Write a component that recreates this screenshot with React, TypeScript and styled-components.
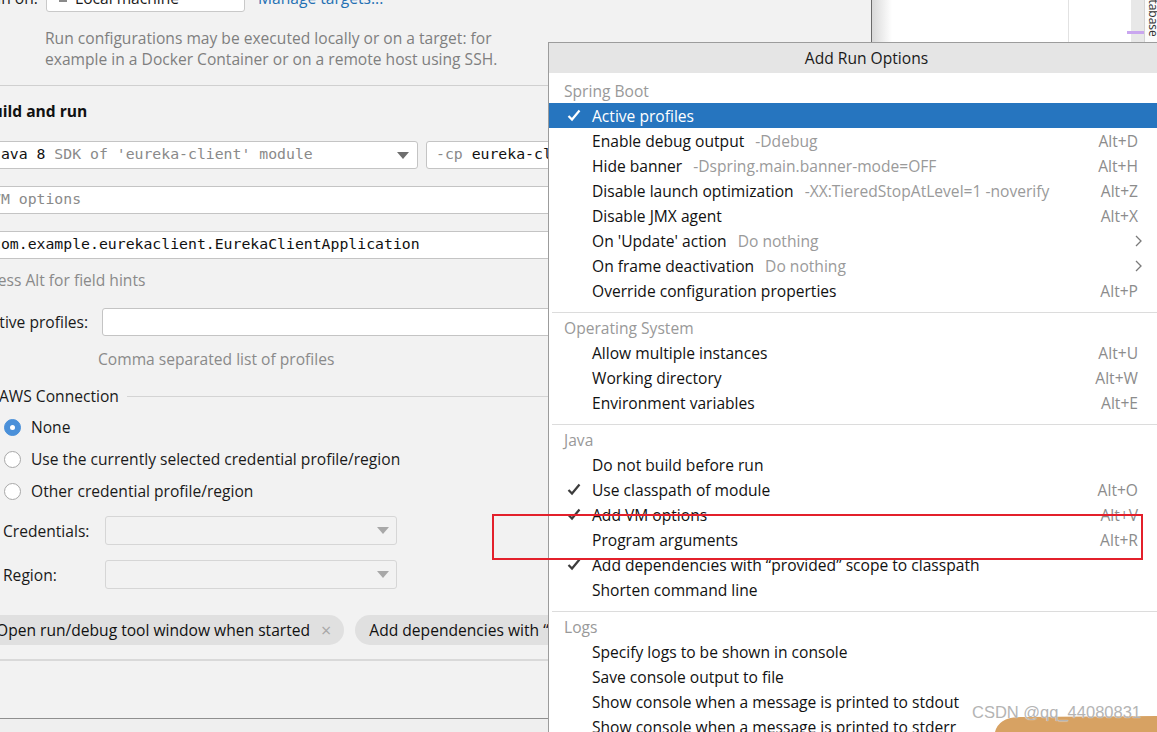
import React from 'react';
import styled, { createGlobalStyle } from 'styled-components';

const GlobalStyle = createGlobalStyle`
  html, body {
    margin: 0;
    padding: 0;
    background: #efefef;
  }
  body {
    font-family: 'Open Sans', 'Noto Sans', sans-serif;
    font-size: 15.6px;
    color: #1a1a1a;
  }
`;

type MenuItem = {
  label: string;
  hint?: string;
  shortcut?: string;
  checked?: boolean;
  selected?: boolean;
  submenu?: boolean;
};

type MenuGroup = { title: string; items: MenuItem[] };

const groups: MenuGroup[] = [
  {
    title: 'Spring Boot',
    items: [
      { label: 'Active profiles', checked: true, selected: true },
      { label: 'Enable debug output', hint: '-Ddebug', shortcut: 'Alt+D' },
      { label: 'Hide banner', hint: '-Dspring.main.banner-mode=OFF', shortcut: 'Alt+H' },
      {
        label: 'Disable launch optimization',
        hint: '-XX:TieredStopAtLevel=1 -noverify',
        shortcut: 'Alt+Z',
      },
      { label: 'Disable JMX agent', shortcut: 'Alt+X' },
      { label: "On 'Update' action", hint: 'Do nothing', submenu: true },
      { label: 'On frame deactivation', hint: 'Do nothing', submenu: true },
      { label: 'Override configuration properties', shortcut: 'Alt+P' },
    ],
  },
  {
    title: 'Operating System',
    items: [
      { label: 'Allow multiple instances', shortcut: 'Alt+U' },
      { label: 'Working directory', shortcut: 'Alt+W' },
      { label: 'Environment variables', shortcut: 'Alt+E' },
    ],
  },
  {
    title: 'Java',
    items: [
      { label: 'Do not build before run' },
      { label: 'Use classpath of module', checked: true, shortcut: 'Alt+O' },
      { label: 'Add VM options', checked: true, shortcut: 'Alt+V' },
      { label: 'Program arguments', shortcut: 'Alt+R' },
      { label: 'Add dependencies with \u201cprovided\u201d scope to classpath', checked: true },
      { label: 'Shorten command line' },
    ],
  },
  {
    title: 'Logs',
    items: [
      { label: 'Specify logs to be shown in console' },
      { label: 'Save console output to file' },
      { label: 'Show console when a message is printed to stdout' },
      { label: 'Show console when a message is printed to stderr' },
    ],
  },
];

const CheckIcon = ({ color }: { color: string }) => (
  <svg width="14" height="13" viewBox="0 0 14 13">
    <polyline points="1.5,7 5,10.5 12.5,1.5" fill="none" stroke={color} strokeWidth="2.2" />
  </svg>
);

const ArrowDown = ({ color }: { color: string }) => (
  <svg width="12" height="7" viewBox="0 0 12 7">
    <polygon points="0,0 12,0 6,7" fill={color} />
  </svg>
);

const Chevron = () => (
  <svg width="7" height="12" viewBox="0 0 7 12">
    <polyline points="1,1 6,6 1,11" fill="none" stroke="#7a7a7a" strokeWidth="1.3" />
  </svg>
);

const App: React.FC = () => {
  return (
    <>
      <GlobalStyle />
      <Screen>
        <Dialog>
          <Form>
            <RunOnRow>
              <RunOnLabel>Run on:</RunOnLabel>
              <TargetCombo>
                <MachineIcon />
                <span>Local machine</span>
                <TinyArrow />
              </TargetCombo>
              <Link>Manage targets...</Link>
            </RunOnRow>
            <HelpText>
              Run configurations may be executed locally or on a target: for
              <br />
              example in a Docker Container or on a remote host using SSH.
            </HelpText>
            <Divider />
            <SectionTitle>Build and run</SectionTitle>
            <FieldRow>
              <Combo width={436}>
                <Mono>
                  java 8 <Muted>SDK of 'eureka-client' module</Muted>
                </Mono>
                <ArrowDown color="#6e6e6e" />
              </Combo>
              <TextField>
                <Mono>
                  <Muted>-cp</Muted> eureka-client
                </Mono>
              </TextField>
            </FieldRow>
            <FieldRow>
              <TextField>
                <Mono>
                  <Muted>VM options</Muted>
                </Mono>
              </TextField>
            </FieldRow>
            <FieldRow>
              <TextField>
                <Mono>com.example.eurekaclient.EurekaClientApplication</Mono>
              </TextField>
            </FieldRow>
            <FieldHint>Press Alt for field hints</FieldHint>
            <ProfilesRow>
              <ProfilesLabel>Active profiles:</ProfilesLabel>
              <TextField />
            </ProfilesRow>
            <ProfilesNote>Comma separated list of profiles</ProfilesNote>
            <GroupTitle>AWS Connection</GroupTitle>
            <RadioRow>
              <Radio checked />
              None
            </RadioRow>
            <RadioRow>
              <Radio />
              Use the currently selected credential profile/region
            </RadioRow>
            <RadioRow>
              <Radio />
              Other credential profile/region
            </RadioRow>
            <SubRow>
              <SubLabel>Credentials:</SubLabel>
              <DisabledCombo>
                <ArrowDown color="#a8a8a8" />
              </DisabledCombo>
            </SubRow>
            <SubRow gap={15}>
              <SubLabel>Region:</SubLabel>
              <DisabledCombo>
                <ArrowDown color="#a8a8a8" />
              </DisabledCombo>
            </SubRow>
            <ChipRow>
              <Chip>
                Open run/debug tool window when started
                <ChipClose>×</ChipClose>
              </Chip>
              <Chip>Add dependencies with “provided” scope to classpath</Chip>
            </ChipRow>
            <Divider thick />
          </Form>
        </Dialog>

        <Editor>
          <EditorShadow />
          <EditorPane />
          <EditorPane narrow />
          <ScrollStrip>
            <ErrorMark />
          </ScrollStrip>
          <SideStrip>
            <SideLabel>Database</SideLabel>
          </SideStrip>
        </Editor>

        <Popup>
          <PopupTitle>Add Run Options</PopupTitle>
          <MenuList>
            {groups.map((group, gi) => (
              <React.Fragment key={group.title}>
                {gi > 0 && <MenuSeparator />}
                <GroupHeader>{group.title}</GroupHeader>
                {group.items.map((item) => (
                  <MenuRow key={item.label} selected={item.selected}>
                    <CheckCell>
                      {item.checked && <CheckIcon color={item.selected ? '#ffffff' : '#3c3c3c'} />}
                    </CheckCell>
                    <span>{item.label}</span>
                    {item.hint && <MenuHint>{item.hint}</MenuHint>}
                    {item.shortcut && <Shortcut>{item.shortcut}</Shortcut>}
                    {item.submenu && (
                      <SubmenuMark>
                        <Chevron />
                      </SubmenuMark>
                    )}
                  </MenuRow>
                ))}
              </React.Fragment>
            ))}
          </MenuList>
        </Popup>

        <Highlight />
        <Blob width="162" height="16" viewBox="0 0 162 16">
          <path d="M0,16 Q4,1 26,1 L162,0 L162,16 Z" fill="#d7a263" />
        </Blob>
        <Watermark>CSDN @qq_44080831</Watermark>
      </Screen>
    </>
  );
};

export default App;

const Screen = styled.div`
  position: relative;
  width: 1157px;
  height: 732px;
  overflow: hidden;
  display: flex;
  align-items: flex-start;
  background: #efefef;
`;

const Dialog = styled.div`
  flex: none;
  width: 872px;
  height: 719px;
  box-sizing: border-box;
  background: #f2f2f2;
  border-right: 1px solid #6b6b6b;
  border-bottom: 1px solid #8f8f8f;
  overflow: hidden;
`;

const Form = styled.div`
  display: flex;
  flex-direction: column;
  margin-left: -18px;
  margin-top: -16px;
`;

const RunOnRow = styled.div`
  display: flex;
  align-items: center;
  height: 28px;
`;

const RunOnLabel = styled.span`
  width: 64px;
`;

const TargetCombo = styled.div`
  display: flex;
  align-items: center;
  gap: 8px;
  width: 199px;
  height: 28px;
  box-sizing: border-box;
  padding: 0 12px;
  background: #ffffff;
  border: 1px solid #c9c9c9;
  border-radius: 3px;
`;

const MachineIcon = styled.span`
  width: 8px;
  height: 8px;
  background: #8a8a8a;
`;

const TinyArrow = styled.span`
  margin-left: auto;
  border-left: 3px solid transparent;
  border-right: 3px solid transparent;
  border-top: 4px solid #777;
`;

const Link = styled.span`
  margin-left: 13px;
  color: #2470b3;
`;

const HelpText = styled.div`
  margin: 16px 0 0 63px;
  line-height: 21px;
  color: #7f7f7f;
`;

const Divider = styled.div<{ thick?: boolean }>`
  margin-top: ${(p) => (p.thick ? '14px' : '15px')};
  height: ${(p) => (p.thick ? '2px' : '1px')};
  background: ${(p) => (p.thick ? '#d9d9d9' : '#d0d0d0')};
`;

const SectionTitle = styled.div`
  margin-top: 15px;
  line-height: 20px;
  font-weight: 700;
  color: #111;
`;

const FieldRow = styled.div`
  display: flex;
  gap: 8px;
  margin-top: 20px;
  & + & {
    margin-top: 17px;
  }
`;

const Combo = styled.div<{ width: number }>`
  display: flex;
  align-items: center;
  justify-content: space-between;
  flex: none;
  width: ${(p) => p.width}px;
  height: 28px;
  box-sizing: border-box;
  padding: 0 8px 0 9px;
  background: #ffffff;
  border: 1px solid #c4c4c4;
  border-radius: 3px;
`;

const TextField = styled.div`
  flex: 1;
  display: flex;
  align-items: center;
  height: 28px;
  box-sizing: border-box;
  padding: 0 9px;
  background: #ffffff;
  border: 1px solid #c4c4c4;
  border-radius: 3px;
`;

const Mono = styled.span`
  font-family: 'DejaVu Sans Mono', 'Liberation Mono', monospace;
  font-size: 14.8px;
  line-height: 18px;
  color: #111;
  white-space: pre;
  margin-top: -2px;
`;

const Muted = styled.span`
  color: #8a8a8a;
`;

const FieldHint = styled.div`
  margin-top: 11px;
  line-height: 20px;
  color: #8a8a8a;
`;

const ProfilesRow = styled.div`
  display: flex;
  align-items: center;
  margin-top: 18px;
`;

const ProfilesLabel = styled.span`
  width: 120px;
  flex: none;
`;

const ProfilesNote = styled.div`
  margin: 13px 0 0 116px;
  line-height: 20px;
  color: #8a8a8a;
`;

const GroupTitle = styled.div`
  display: flex;
  align-items: center;
  margin-top: 17px;
  padding-left: 17px;
  line-height: 20px;
  &::after {
    content: '';
    flex: 1;
    height: 1px;
    margin-left: 8px;
    background: #d4d4d4;
  }
`;

const RadioRow = styled.div`
  display: flex;
  align-items: center;
  gap: 10px;
  height: 32px;
  padding-left: 22px;
  ${GroupTitle} + & {
    margin-top: 5px;
  }
`;

const Radio = styled.span<{ checked?: boolean }>`
  flex: none;
  width: 17px;
  height: 17px;
  box-sizing: border-box;
  border-radius: 50%;
  border: 1px solid ${(p) => (p.checked ? '#4a90d9' : '#a8a8a8')};
  background: ${(p) => (p.checked ? '#4a90d9' : '#ffffff')};
  display: flex;
  align-items: center;
  justify-content: center;
  &::after {
    content: '';
    display: ${(p) => (p.checked ? 'block' : 'none')};
    width: 5px;
    height: 5px;
    border-radius: 50%;
    background: #ffffff;
  }
`;

const SubRow = styled.div<{ gap?: number }>`
  display: flex;
  align-items: center;
  margin-top: ${(p) => p.gap ?? 9}px;
  padding-left: 21px;
`;

const SubLabel = styled.span`
  width: 102px;
  flex: none;
`;

const DisabledCombo = styled.div`
  display: flex;
  align-items: center;
  justify-content: flex-end;
  width: 292px;
  height: 29px;
  box-sizing: border-box;
  padding-right: 7px;
  background: #f2f2f2;
  border: 1px solid #d6d6d6;
  border-radius: 3px;
`;

const ChipRow = styled.div`
  display: flex;
  gap: 11px;
  margin-top: 26px;
  white-space: nowrap;
`;

const Chip = styled.div`
  display: flex;
  align-items: center;
  flex: none;
  height: 30px;
  padding: 0 13px 0 14px;
  border-radius: 15px;
  background: #e0e0e0;
  color: #111;
`;

const ChipClose = styled.span`
  margin-left: 11px;
  font-size: 18px;
  color: #a8a8a8;
`;

const Editor = styled.div`
  flex: 1;
  display: flex;
  height: 100%;
  background: #ffffff;
`;

const EditorShadow = styled.div`
  width: 20px;
  background: linear-gradient(to right, #d9d9d9, #ffffff);
`;

const EditorPane = styled.div<{ narrow?: boolean }>`
  width: ${(p) => (p.narrow ? '62px' : '176px')};
  border-right: ${(p) => (p.narrow ? 'none' : '1px solid #e2e2e2')};
  background: #ffffff;
`;

const ScrollStrip = styled.div`
  width: 13px;
  background: #e8e8e8;
  display: flex;
  flex-direction: column;
`;

const ErrorMark = styled.div`
  margin: 31px 0 0 -4px;
  width: 17px;
  height: 3px;
  background: #c9a6ef;
`;

const SideStrip = styled.div`
  flex: 1;
  border-left: 1px solid #d4d4d4;
  background: #fbfbfb;
  overflow: hidden;
`;

const SideLabel = styled.div`
  writing-mode: vertical-rl;
  margin: -16px 0 0 0;
  font-size: 12px;
  color: #333;
`;

const Popup = styled.div`
  position: absolute;
  left: 548px;
  top: 42px;
  width: 636px;
  height: 720px;
  box-sizing: border-box;
  background: #ffffff;
  border-left: 1px solid #9c9c9c;
  border-top: 1px solid #9c9c9c;
`;

const PopupTitle = styled.div`
  height: 30px;
  display: flex;
  align-items: center;
  justify-content: center;
  background: #e5e5e5;
  color: #1a1a1a;
`;

const MenuList = styled.div`
  padding-top: 5px;
`;

const GroupHeader = styled.div`
  height: 25px;
  display: flex;
  align-items: center;
  padding-left: 15px;
  color: #999999;
`;

const MenuRow = styled.div<{ selected?: boolean }>`
  display: flex;
  align-items: center;
  height: 25px;
  padding: 0 46px 0 18px;
  white-space: nowrap;
  background: ${(p) => (p.selected ? '#2675bf' : 'transparent')};
  color: ${(p) => (p.selected ? '#ffffff' : '#111111')};
`;

const CheckCell = styled.span`
  width: 25px;
  flex: none;
  display: flex;
  align-items: center;
`;

const MenuHint = styled.span`
  margin-left: 11px;
  color: #9a9a9a;
`;

const Shortcut = styled.span`
  margin-left: auto;
  color: #8c8c8c;
`;

const SubmenuMark = styled.span`
  margin: 0 -4px 0 auto;
  display: flex;
`;

const MenuSeparator = styled.div`
  height: 1px;
  margin: 9px 0 2px 3px;
  background: #dcdcdc;
`;

const Highlight = styled.div`
  position: absolute;
  left: 492px;
  top: 514px;
  width: 651px;
  height: 46px;
  box-sizing: border-box;
  border: 2px solid #e3202b;
`;

const Blob = styled.svg`
  position: absolute;
  left: 995px;
  bottom: 0;
`;

const Watermark = styled.div`
  position: absolute;
  left: 972px;
  top: 703px;
  font-family: 'Liberation Sans', sans-serif;
  font-size: 16.5px;
  color: #b4b4b4;
  text-shadow: 0 0 1px #ffffff;
`;
